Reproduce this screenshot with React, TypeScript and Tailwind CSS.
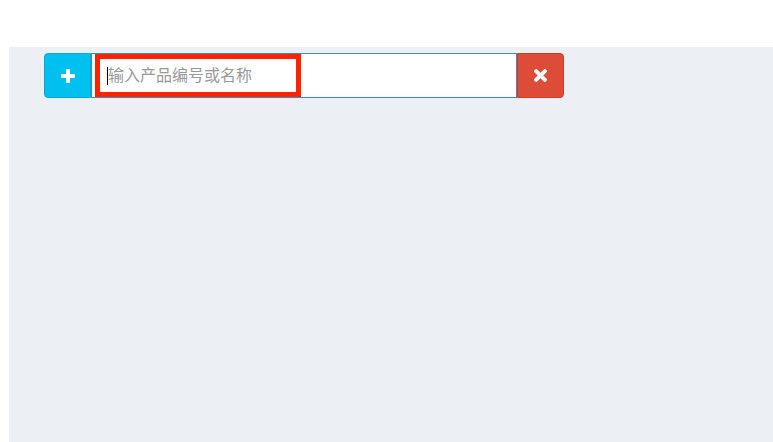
const PlusIcon = () => (
  <svg width="14" height="14" viewBox="0 0 14 14" fill="currentColor">
    <rect x="5" y="0" width="4" height="14" rx="1" />
    <rect x="0" y="5" width="14" height="4" rx="1" />
  </svg>
);

const TimesIcon = () => (
  <svg width="13" height="13" viewBox="0 0 13 13" fill="currentColor">
    <rect x="4.5" y="-1.5" width="4" height="16" rx="1" transform="rotate(45 6.5 6.5)" />
    <rect x="4.5" y="-1.5" width="4" height="16" rx="1" transform="rotate(-45 6.5 6.5)" />
  </svg>
);

const App = () => {
  return (
    <div className="w-[773px] h-[442px] flex flex-col bg-white overflow-hidden font-['Liberation_Sans','Noto_Sans_CJK_SC',sans-serif]">
      <header className="h-[47px] shrink-0 bg-white" />
      <div className="flex flex-1">
        <aside className="w-[9px] shrink-0 bg-white" />
        <main className="flex-1 bg-[#ecf0f5] pt-[6px] pl-[35px]">
          <div className="flex w-[520px] h-[45px]">
            <button className="w-[47px] shrink-0 flex items-center justify-center bg-[#00c0ef] border border-[#00acd6] rounded-l-[4px] text-white">
              <PlusIcon />
            </button>
            <div className="flex-1 flex items-center bg-white border border-[#3c8dbc] pl-[3px]">
              <div className="w-[206px] h-[43px] flex items-center border-[5px] border-[#ff2200] pl-[7px]">
                <span className="w-px h-[18px] bg-black" />
                <span className="text-[16px] text-[#999] leading-none">输入产品编号或名称</span>
              </div>
            </div>
            <button className="w-[47px] shrink-0 flex items-center justify-center bg-[#dd4b39] border border-[#d73925] rounded-r-[4px] text-white">
              <TimesIcon />
            </button>
          </div>
        </main>
      </div>
    </div>
  );
};

export default App;
